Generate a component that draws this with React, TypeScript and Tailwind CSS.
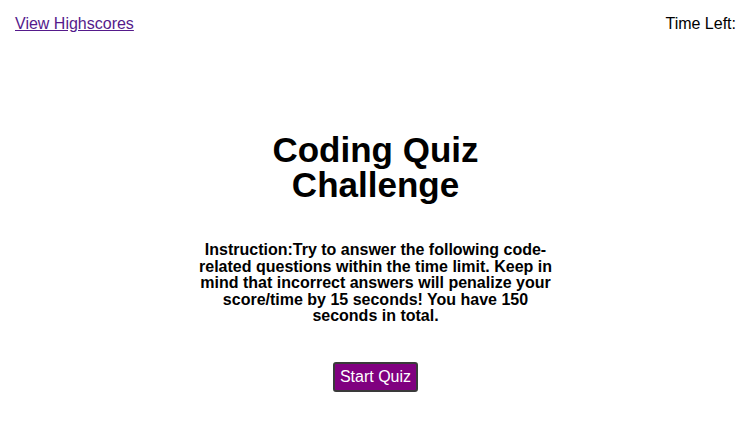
export default function App() {
  return (
    <div className="min-h-[447px] bg-white text-black" style={{ fontFamily: '"Liberation Sans", Arial, sans-serif' }}>
      <header className="flex items-start justify-between px-[15px] pt-[15px] text-[16px] leading-[18px]">
        <a href="#" className="text-[#551a8b] underline">
          View Highscores
        </a>
        <span>Time Left:</span>
      </header>

      <main className="flex flex-col items-center">
        <h1 className="mt-[99px] w-[260px] text-center text-[35px] font-bold leading-[35px]">
          Coding Quiz Challenge
        </h1>
        <p className="mt-[40px] w-[360px] text-center text-[16px] font-bold leading-[16.5px]">
          Instruction:Try to answer the following code-related questions within the time limit. Keep in mind that incorrect answers will penalize your score/time by 15 seconds! You have 150 seconds in total.
        </p>
        <button className="mt-[37px] h-[30px] rounded-[3px] border-2 border-[#3a3a3a] bg-[#800080] px-[5px] text-[16px] text-white">
          Start Quiz
        </button>
      </main>
    </div>
  );
}
